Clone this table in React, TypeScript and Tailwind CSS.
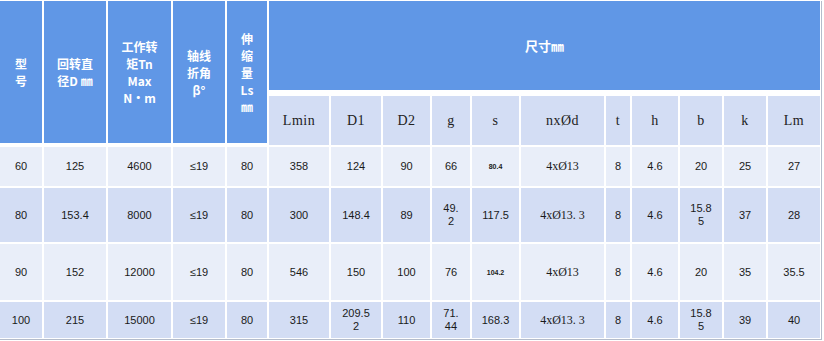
import React from "react";

type Cell = { text: React.ReactNode; kind?: "num" | "tiny" | "serif" };

const SUB_HEADERS = ["Lmin", "D1", "D2", "g", "s", "nxØd", "t", "h", "b", "k", "Lm"];

const ROWS: { height: string; tone: "light" | "dark"; cells: Cell[] }[] = [
  {
    height: "h-[39px]",
    tone: "light",
    cells: [
      { text: "60" }, { text: "125" }, { text: "4600" }, { text: "≤19" }, { text: "80" },
      { text: "358" }, { text: "124" }, { text: "90" }, { text: "66" },
      { text: "80.4", kind: "tiny" }, { text: "4xØ13", kind: "serif" },
      { text: "8" }, { text: "4.6" }, { text: "20" }, { text: "25" }, { text: "27" },
    ],
  },
  {
    height: "h-[54px]",
    tone: "dark",
    cells: [
      { text: "80" }, { text: "153.4" }, { text: "8000" }, { text: "≤19" }, { text: "80" },
      { text: "300" }, { text: "148.4" }, { text: "89" },
      { text: <>49.<br />2</> },
      { text: "117.5" }, { text: "4xØ13. 3", kind: "serif" },
      { text: "8" }, { text: "4.6" },
      { text: <>15.8<br />5</> },
      { text: "37" }, { text: "28" },
    ],
  },
  {
    height: "h-[56px]",
    tone: "light",
    cells: [
      { text: "90" }, { text: "152" }, { text: "12000" }, { text: "≤19" }, { text: "80" },
      { text: "546" }, { text: "150" }, { text: "100" }, { text: "76" },
      { text: "104.2", kind: "tiny" }, { text: "4xØ13", kind: "serif" },
      { text: "8" }, { text: "4.6" }, { text: "20" }, { text: "35" }, { text: "35.5" },
    ],
  },
  {
    height: "h-[36px]",
    tone: "dark",
    cells: [
      { text: "100" }, { text: "215" }, { text: "15000" }, { text: "≤19" }, { text: "80" },
      { text: "315" },
      { text: <>209.5<br />2</> },
      { text: "110" },
      { text: <>71.<br />44</> },
      { text: "168.3" }, { text: "4xØ13. 3", kind: "serif" },
      { text: "8" }, { text: "4.6" },
      { text: <>15.8<br />5</> },
      { text: "39" }, { text: "40" },
    ],
  },
];

function HeadCell({ children }: { children: React.ReactNode }) {
  return (
    <div className="row-span-2 mb-[2px] flex items-center justify-center bg-[#6097e6] text-center font-['Noto_Sans_CJK_SC',sans-serif] text-[12px] font-bold leading-[17px] text-white">
      <div>{children}</div>
    </div>
  );
}

function DataCell({ cell, tone }: { cell: Cell; tone: "light" | "dark" }) {
  const bg = tone === "light" ? "bg-[#e9eef9]" : "bg-[#d3ddf4]";
  let font = "font-['Liberation_Sans',Arial,sans-serif] text-[11px] leading-[13px]";
  if (cell.kind === "tiny") font = "font-['Liberation_Sans',Arial,sans-serif] text-[7px] font-bold leading-[9px]";
  if (cell.kind === "serif") font = "font-['Liberation_Serif',serif] text-[12px] leading-[13px]";
  return (
    <div className={`flex items-center justify-center text-center text-[#1a1a1a] ${bg} ${font}`}>
      <div>{cell.text}</div>
    </div>
  );
}

export default function App() {
  return (
    <div className="w-[823px] bg-white pt-[1px]">
      <div className="w-[822px] border-b border-r border-[#b4bccb] pb-[1px] pr-[1px]">
        <div className="grid grid-cols-[42px_62px_63px_52px_40px_60px_50px_47px_38px_47px_83px_24px_46px_42px_42px_52px] gap-[2px]">
          <HeadCell>型<br />号</HeadCell>
          <HeadCell>回转直<br />径D ㎜</HeadCell>
          <HeadCell>工作转<br />矩Tn<br />Max<br />N•m</HeadCell>
          <HeadCell>轴线<br />折角<br />β°</HeadCell>
          <HeadCell>伸<br />缩<br />量<br />Ls<br />㎜</HeadCell>
          <div className="col-span-11 flex h-[89px] items-center justify-center bg-[#6097e6] font-['Noto_Sans_CJK_SC',sans-serif] text-[13px] font-bold text-white">
            尺寸㎜
          </div>
          {SUB_HEADERS.map((h) => (
            <div
              key={h}
              className="mt-[4px] flex h-[49px] items-center justify-center bg-[#d3ddf4] font-['Liberation_Serif',serif] text-[14px] tracking-[0.5px] text-[#222]"
            >
              {h}
            </div>
          ))}
          {ROWS.map((row, ri) =>
            row.cells.map((cell, ci) => (
              <div key={`${ri}-${ci}`} className={`grid ${row.height}`}>
                <DataCell cell={cell} tone={row.tone} />
              </div>
            ))
          )}
        </div>
      </div>
    </div>
  );
}
